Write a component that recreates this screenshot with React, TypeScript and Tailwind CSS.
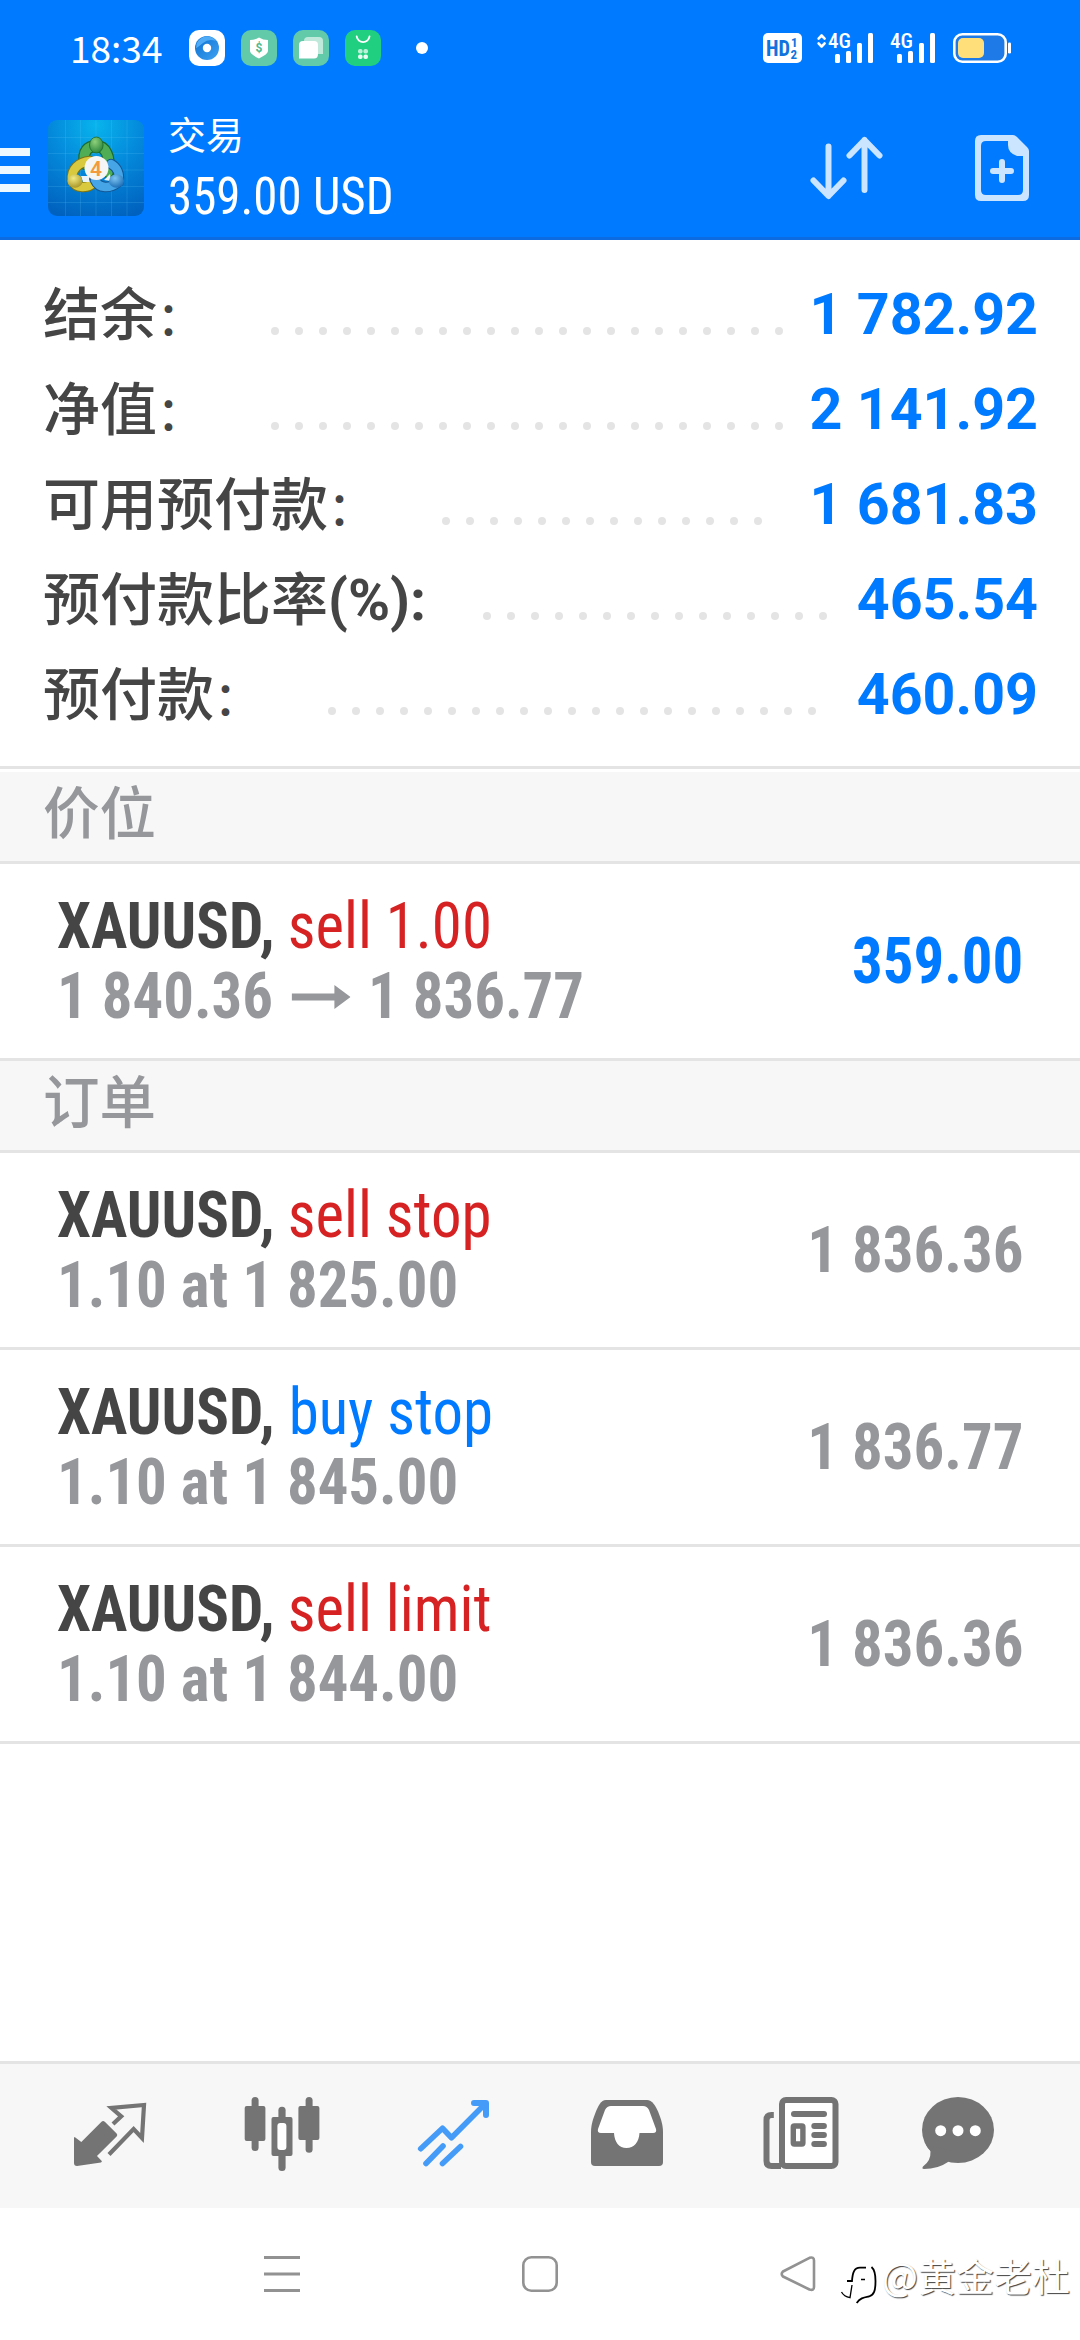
import type { ReactNode } from 'react'

const summary = [
  { label: '结余', value: '1 782.92', dots: 22 },
  { label: '净值', value: '2 141.92', dots: 22 },
  { label: '可用预付款', value: '1 681.83', dots: 14 },
  { label: '预付款比率', unit: '(%):', value: '465.54', dots: 15 },
  { label: '预付款', value: '460.09', dots: 21 },
]

const orders = [
  { side: 'sell stop', buy: false, detail: '1.10 at 1 825.00', price: '1 836.36' },
  { side: 'buy stop', buy: true, detail: '1.10 at 1 845.00', price: '1 836.77' },
  { side: 'sell limit', buy: false, detail: '1.10 at 1 844.00', price: '1 836.36' },
]

function Signal({ roaming = false }: { roaming?: boolean }) {
  return (
    <svg className="h-[30px] w-[56px] overflow-visible" viewBox="0 0 56 30" fill="white">
      {roaming && (
        <g fill="none" stroke="white" strokeWidth="2.6" strokeLinecap="round" strokeLinejoin="round">
          <path d="M1.6 5.6 L4.6 2.4 L7.6 5.6" />
          <path d="M1.6 10.4 L4.6 13.6 L7.6 10.4" />
        </g>
      )}
      <text x="11" y="15" fontSize="20" fontWeight="500" textLength="23" lengthAdjust="spacingAndGlyphs" className="font-['Roboto_Condensed',sans-serif]">
        4G
      </text>
      <rect x="18" y="21" width="5" height="9" rx="1.5" />
      <rect x="29" y="18" width="5" height="12" rx="1.5" />
      <rect x="40" y="10" width="5" height="20" rx="1.5" />
      <rect x="51" y="0" width="5" height="30" rx="1.5" />
    </svg>
  )
}

function StatusBar() {
  return (
    <div className="flex h-24 items-center justify-between pr-[69px] pl-[70px]">
      <div className="flex items-center">
        <span className="mb-[3px] w-[119px] font-['Noto_Sans_CJK_SC',sans-serif] text-[37px] leading-9 text-white">18:34</span>
        <div className="flex gap-4">
          <svg className="size-9" viewBox="0 0 36 36">
            <defs>
              <linearGradient id="eye" x1="0" y1="0" x2="1" y2="1">
                <stop offset="0" stopColor="#0a6fd0" />
                <stop offset="1" stopColor="#3ea2f2" />
              </linearGradient>
            </defs>
            <rect width="36" height="36" rx="10" fill="white" />
            <circle cx="18" cy="18" r="12" fill="url(#eye)" />
            <path d="M7 18 A11 11 0 0 1 27 11 Q20 8 14 13 T7 18Z" fill="#4fabf5" />
            <circle cx="18" cy="18" r="4.2" fill="white" />
          </svg>
          <svg className="size-9" viewBox="0 0 36 36">
            <rect width="36" height="36" rx="10" fill="#62c9a9" />
            <path d="M18 7.5 Q22 10 27 10 V21 Q27 24 18 28.5 Q9 24 9 21 V10 Q14 10 18 7.5Z" fill="white" />
            <text x="18" y="22" textAnchor="middle" fontSize="12" fontWeight="700" fill="#4fb98f" className="font-['Roboto',sans-serif]">
              $
            </text>
          </svg>
          <svg className="size-9" viewBox="0 0 36 36">
            <rect width="36" height="36" rx="10" fill="#62c9a9" />
            <path d="M15 7 H26 Q30 7 30 11 V24 H15 Q11 24 11 20 V11 Q11 7 15 7Z" fill="white" fillOpacity="0.6" />
            <path d="M10 11 H21 Q25 11 25 15 V24 Q25 28.500 21 28.500 H6 V15 Q6 11 10 11Z" fill="white" />
          </svg>
          <svg className="size-9" viewBox="0 0 36 36">
            <rect width="36" height="36" rx="10" fill="#20cf80" />
            <path d="M11.700 6.500 A6.500 6.700 0 0 0 24.500 6.500" fill="none" stroke="white" strokeWidth="1.800" strokeLinecap="round" />
            <g fill="white" fillOpacity="0.9">
              <rect x="13" y="19" width="4.600" height="4.600" rx="2" fillOpacity="0.7" />
              <rect x="18.400" y="19" width="4.600" height="4.600" rx="2" fillOpacity="0.7" />
              <rect x="13" y="24.400" width="4.600" height="4.600" rx="2" />
              <rect x="18.400" y="24.400" width="4.600" height="4.600" rx="2" />
            </g>
          </svg>
        </div>
        <span className="ml-[35px] size-3 rounded-full bg-white" />
      </div>
      <div className="flex items-center">
        <svg className="mr-[15px] h-[30px] w-[39px]" viewBox="0 0 39 30">
          <rect width="39" height="30" rx="5" fill="white" />
          <g fill="#1173dd" className="font-['Roboto_Condensed',sans-serif]" fontWeight="700">
            <text x="3" y="23" fontSize="22" textLength="24" lengthAdjust="spacingAndGlyphs">HD</text>
            <text x="28" y="14" fontSize="13">1</text>
            <text x="27.500" y="25.500" fontSize="13">2</text>
          </g>
        </svg>
        <Signal roaming />
        <div className="w-1.5" />
        <Signal />
        <svg className="ml-[18px] h-[30px] w-[58px]" viewBox="0 0 58 30">
          <rect x="1.300" y="1.300" width="51.400" height="27.400" rx="8" fill="#1d7ae6" stroke="white" strokeWidth="2.600" />
          <rect x="5" y="5" width="26" height="20" rx="5" fill="#ffdf7a" />
          <rect x="55" y="9.500" width="3" height="11" rx="1.200" fill="white" />
        </svg>
      </div>
    </div>
  )
}

function Logo() {
  return (
    <svg className="size-24" viewBox="0 0 96 96">
      <defs>
        <radialGradient id="sky" cx="0.5" cy="0.05" r="1">
          <stop offset="0" stopColor="#08b4ec" />
          <stop offset="0.45" stopColor="#048bdc" />
          <stop offset="1" stopColor="#0062be" />
        </radialGradient>
        <radialGradient id="green" cx="0.4" cy="0.3" r="0.8">
          <stop offset="0" stopColor="#8fd07a" />
          <stop offset="1" stopColor="#1f7d36" />
        </radialGradient>
        <radialGradient id="yellow" cx="0.4" cy="0.3" r="0.8">
          <stop offset="0" stopColor="#f2ea84" />
          <stop offset="1" stopColor="#a08c1c" />
        </radialGradient>
        <radialGradient id="blue" cx="0.4" cy="0.3" r="0.8">
          <stop offset="0" stopColor="#7cc4f2" />
          <stop offset="1" stopColor="#1263ae" />
        </radialGradient>
      </defs>
      <rect width="96" height="96" rx="9" fill="url(#sky)" />
      <path
        d="M17.500 0 V96 M32.500 0 V96 M48 0 V96 M63.500 0 V96 M79 0 V96 M0 17.500 H96 M0 33.500 H96 M0 50 H96 M0 66.500 H96 M0 82.500 H96"
        stroke="#6fd0ff"
        strokeWidth="0.800"
        strokeOpacity="0.220"
      />
      <g fill="none" strokeLinecap="round">
        <path d="M37 44 C34 31 40 26 48.500 26 C57 26 63 36 60 52" stroke="#1c6a2c" strokeWidth="12" />
        <path d="M37 44 C34 31 40 26 48.500 26 C57 26 63 36 60 52" stroke="#4fae55" strokeWidth="9.500" />
        <path d="M42 41 C31 42 23 49 24 60 C28 69 40 69 46 62" stroke="#7d7414" strokeWidth="10.500" />
        <path d="M42 41 C31 42 23 49 24 60 C28 69 40 69 46 62" stroke="#d9c93f" strokeWidth="8.500" />
        <path d="M47 60 C51 69 62 69 70.500 62 C72 54 69 47 63 44" stroke="#135694" strokeWidth="10.500" />
        <path d="M47 60 C51 69 62 69 70.500 62 C72 54 69 47 63 44" stroke="#46a5e6" strokeWidth="8.500" />
      </g>
      <path d="M33 56 L41 56 L41 62 L35 62Z M56 60 L62 54 L63 61Z" fill="#e9f3f8" />
      <ellipse cx="48.300" cy="25" rx="6.800" ry="8" fill="url(#green)" stroke="#1c6a2c" strokeWidth="0.800" />
      <ellipse cx="27" cy="61" rx="7.500" ry="6.800" fill="url(#yellow)" />
      <ellipse cx="68.500" cy="61" rx="7.500" ry="6.800" fill="url(#blue)" />
      <circle cx="48.500" cy="48" r="12" fill="#f5f5f5" />
      <text x="48" y="55.500" textAnchor="middle" fontSize="21" fontWeight="600" fill="#f39a3d" className="font-['Roboto',sans-serif]">
        4
      </text>
    </svg>
  )
}

function AppBar() {
  return (
    <div className="flex h-36 items-start border-b-3 border-[#0c6be0] text-white">
      <div className="mt-[52px] flex w-[30px] flex-col gap-2.5">
        <span className="h-2 bg-[#eef8ff]" />
        <span className="h-2 bg-[#eef8ff]" />
        <span className="h-2 bg-[#eef8ff]" />
      </div>
      <div className="mt-6 ml-[18px]">
        <Logo />
      </div>
      <div className="ml-6 flex-1 pt-3.5 whitespace-nowrap">
        <div className="font-['Noto_Sans_CJK_SC',sans-serif] text-[38px] leading-[46px]">交易</div>
        <div className="origin-left scale-x-95 pt-1 font-['Roboto_Condensed',sans-serif] text-[51.500px] leading-[74px]">359.00 USD</div>
      </div>
      <svg className="mt-10 mr-[88px] h-[66px] w-[80px]" viewBox="0 0 80 66" fill="none" stroke="#cbe4ff" strokeWidth="6" strokeLinecap="round" strokeLinejoin="round">
        <path d="M21.500 10.500 V59.500 M6.500 44.500 L21.500 60 L36.500 44.500" />
        <path d="M57.500 54 V4 M42.500 19.500 L57.500 4 L72.500 19.500" />
      </svg>
      <svg className="mt-[39px] mr-[51px] h-[66px] w-[54px]" viewBox="0 0 54 66">
        <path
          fillRule="evenodd"
          fill="#cbe4ff"
          d="M6 0 H38 Q40 0 42 2 L52 12 Q54 14 54 16 V60 Q54 66 48 66 H6 Q0 66 0 60 V6 Q0 0 6 0Z M11 6 Q6 6 6 11 V55 Q6 60 11 60 H43 Q48 60 48 55 V21 H42 Q33 18 33 10 V6Z"
        />
        <path d="M27 27 V45 M18 36 H36" stroke="#cbe4ff" strokeWidth="6" strokeLinecap="round" />
      </svg>
    </div>
  )
}

function SectionTitle({ children }: { children: ReactNode }) {
  return (
    <div className="border-b-3 border-[#e4e4e4] bg-[#f7f7f7] pb-[3px] pl-[43px] font-['Roboto','Noto_Sans_CJK_SC',sans-serif] text-[56.500px] leading-[86px] font-medium text-[#96979b]">
      {children}
    </div>
  )
}

type RowProps = { side: string; buy: boolean; detail: ReactNode; children: ReactNode }

function TradeRow({ side, buy, detail, children }: RowProps) {
  return (
    <div className="flex h-[197px] items-center justify-between border-b-3 border-[#e4e4e4] px-[57px] pt-0.5 font-['Roboto_Condensed',sans-serif] text-[64px] leading-[70px] font-bold whitespace-nowrap">
      <div className="origin-left scale-x-95">
        <div className="text-[#454545]">
          XAUUSD, <span className={buy ? 'font-normal text-[#007aff]' : '-ml-px font-normal text-[#d62222]'}>{side}</span>
        </div>
        <div className="flex items-center text-[#96979b]">{detail}</div>
      </div>
      <div className="origin-right scale-x-95">{children}</div>
    </div>
  )
}

function Tabs() {
  return (
    <div className="flex h-[147px] gap-[92.500px] border-t-3 border-[#e4e4e4] bg-[#f7f7f7] pt-7 pl-[70px] text-[#747474]">
      <svg className="h-[86px] w-20" viewBox="0 0 80 86">
        <path d="M4 45.300 H5 L11.300 50 L31.500 29.800 Q33 28.300 34.800 29.800 L46.600 41.500 Q48 43 46.600 44.500 L27 64 L32 69.300 L31 70.500 L7 74 Q4 74 4 71Z" fill="currentColor" />
        <path d="M43 32 L51.200 24.300 L41.500 16 L74 13 L72 46 L63.600 37 L39 62.500" fill="none" stroke="currentColor" strokeWidth="4.200" />
      </svg>
      <svg className="h-[86px] w-20" viewBox="0 0 80 86" fill="currentColor">
        <rect x="8.600" y="5" width="7" height="54" rx="3.500" />
        <rect x="1.700" y="14" width="20.700" height="35" rx="2" />
        <rect x="35.400" y="14.700" width="7.200" height="64.300" rx="3.500" />
        <rect x="28.500" y="25" width="21" height="39" rx="2" />
        <rect x="34.400" y="31" width="9" height="27" rx="3" fill="white" />
        <rect x="62.600" y="5" width="7" height="55.700" rx="3.500" />
        <rect x="55.400" y="14" width="21" height="34" rx="2" />
      </svg>
      <svg className="h-[86px] w-20" viewBox="0 0 80 86" fill="none" stroke="#459cf8" strokeWidth="5.600" strokeLinecap="round">
        <path d="M5.700 56.700 L27.500 36.300 L36.500 45.700 L70 12" strokeLinejoin="round" />
        <path d="M59 11 H71 V23" strokeWidth="6" strokeLinejoin="round" />
        <path d="M11 71.500 L28 54 M27.500 71.500 L45.500 54.500" />
      </svg>
      <svg className="h-[86px] w-20" viewBox="0 0 80 86">
        <path d="M18 8 H59 C64 8 68 14 71 22 C74 30 75 34 75 41 V70 Q75 74 71 74 H7 Q3 74 3 70 V41 C3 34 4 30 7 22 C10 14 13 8 18 8Z" fill="currentColor" />
        <path d="M23 14 H55 Q59 14 61 18 L68 37 Q69 41 65 41 H51.500 C51 50 46 56 38.500 56 S26.500 50 26 41 H13 Q9 41 10 37 L17 18 Q19 14 23 14Z" fill="white" />
      </svg>
      <svg className="h-[86px] w-20 translate-x-px" viewBox="0 0 80 86" fill="currentColor">
        <rect x="21" y="8" width="53.500" height="66" rx="4" fill="white" stroke="currentColor" strokeWidth="6" />
        <path d="M20 74 H10.500 Q5.500 74 5.500 69 V28 Q5.500 23 10.500 23 H12.800" fill="none" stroke="currentColor" strokeWidth="6" />
        <rect x="30" y="19" width="36" height="6" rx="3" />
        <rect x="32.300" y="34" width="9.600" height="18" rx="1" fill="white" stroke="currentColor" strokeWidth="5.400" />
        <rect x="50.300" y="31" width="15.600" height="6" rx="3" />
        <rect x="50.300" y="40" width="15.600" height="6" rx="3" />
        <rect x="50.300" y="49" width="15.600" height="6" rx="3" />
      </svg>
      <svg className="-ml-[14.500px] h-[86px] w-20" viewBox="0 0 80 86" fill="currentColor">
        <ellipse cx="40" cy="38" rx="36" ry="33" />
        <path d="M8 53 L12.500 59 Q13 69 5 74.500 Q3.500 77 6 77 Q20 77 30 70 L40 60Z" />
        <g fill="white">
          <circle cx="22.700" cy="38.700" r="5.500" />
          <circle cx="40" cy="38.700" r="5.500" />
          <circle cx="57.300" cy="38.700" r="5.500" />
        </g>
      </svg>
    </div>
  )
}

function NavBar() {
  return (
    <div className="flex h-[132px] items-start pt-12 pl-[264px]">
      <svg className="size-9" viewBox="0 0 36 36" stroke="#929292" strokeWidth="3">
        <path d="M0 1.500 H36 M0 18 H36 M0 34.500 H36" />
      </svg>
      <svg className="ml-[222px] size-9" viewBox="0 0 36 36" fill="none" stroke="#929292" strokeWidth="2.600">
        <rect x="1.300" y="1.300" width="33.400" height="33.400" rx="8" />
      </svg>
      <svg className="ml-[222px] size-9" viewBox="0 0 36 36" fill="none" stroke="#929292" strokeWidth="2.600" strokeLinejoin="round">
        <path d="M3 15.500 L29.500 1.800 Q34 0.500 34 4.500 V31 Q34 35 29.500 33.500 L3 20.500 Q0.500 18 3 15.500Z" />
      </svg>
      <div className="mt-1.5 ml-6 flex items-start">
        <svg className="h-[44px] w-10" viewBox="0 0 40 44" fill="none" stroke="black" strokeWidth="1.800">
          <path d="M7 19 H12 C12.500 11 14 5.700 20 5.700 H26" />
          <path d="M31.500 5 C35 8 35.500 12 35.500 19 C35.500 29 34 33 29 34.500 C24 35.500 20 36 16.700 41" />
          <path d="M1.500 30 Q4 34.500 10 35.700 L12 23 M21 17.500 H25" strokeWidth="1.300" />
        </svg>
        <span className="-mt-1 ml-0.5 font-['Noto_Sans_CJK_SC',sans-serif] text-[38px] leading-[34px] whitespace-nowrap text-white [text-shadow:1px_1px_1px_rgba(0,0,0,0.75)]">
          @黄金老杜
        </span>
      </div>
    </div>
  )
}

export default function App() {
  return (
    <div className="flex h-[2340px] w-[1080px] flex-col overflow-hidden bg-white">
      <div className="bg-[#007aff]">
        <StatusBar />
        <AppBar />
      </div>

      <div className="mb-[3px] border-b-3 border-[#e4e4e4] px-[43px] pt-[27px] pb-6 font-['Roboto','Noto_Sans_CJK_SC',sans-serif] leading-[95px] whitespace-nowrap">
        {summary.map((row) => (
          <div key={row.label} className="flex h-[95px] items-end">
            <span className="translate-y-px text-[57px] font-medium text-[#454545]">
              {row.label}
              {row.unit ? <span className="font-bold">{row.unit}</span> : <span className="mr-[11px] text-[46px] leading-none">：</span>}
            </span>
            <div className="mb-[27px] ml-[57px] flex flex-1 gap-4">
              {Array.from({ length: row.dots }, (_, i) => (
                <span key={i} className="size-2 shrink-0 rounded-full bg-[#e4e4e4]" />
              ))}
            </div>
            <span className="-mr-px text-[57.400px] font-bold text-[#007aff]">{row.value}</span>
          </div>
        ))}
      </div>

      <SectionTitle>价位</SectionTitle>
      <TradeRow
        side="sell 1.00"
        buy={false}
        detail={
          <>
            1 840.36
            <svg className="mr-[18px] ml-5 h-6 w-[62px]" viewBox="0 0 62 24" fill="currentColor">
              <path d="M0 8.500 H45 V0 L62 12 L45 24 V15.500 H0Z" />
            </svg>
            1 836.77
          </>
        }
      >
        <span className="text-[#007aff]">359.00</span>
      </TradeRow>

      <SectionTitle>订单</SectionTitle>
      {orders.map((o) => (
        <TradeRow key={o.detail} side={o.side} buy={o.buy} detail={o.detail}>
          <span className="text-[#96979b]">{o.price}</span>
        </TradeRow>
      ))}

      <div className="flex-1" />
      <Tabs />
      <NavBar />
    </div>
  )
}
